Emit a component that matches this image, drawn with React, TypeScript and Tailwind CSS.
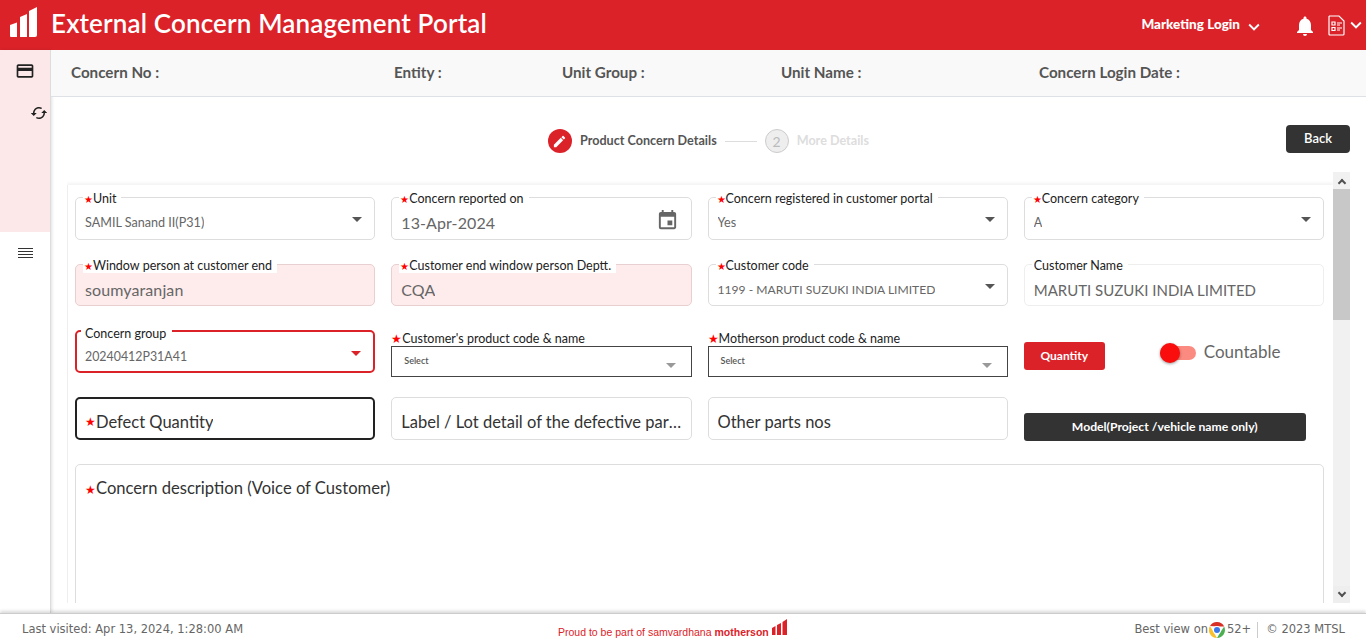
import React from 'react';
import { MdCreditCard, MdEdit, MdEvent, MdNotifications, MdSync, MdKeyboardArrowDown } from 'react-icons/md';

const Star = () => <span className="text-[10px] leading-none text-[#f00]">★</span>;
const BigStar = () => <span className="text-[12px] leading-none text-[#f00]">★</span>;

const Caret = ({ color = 'border-t-[#555]' }: { color?: string }) => (
  <span className={`absolute right-[12px] top-[19px] h-0 w-0 border-x-[5px] border-t-[5px] border-x-transparent ${color}`} />
);

const Field = ({
  label,
  value,
  required = true,
  select = false,
  small = false,
  upper = false,
  pink = false,
  faint = false,
  wide = false,
  children,
}: {
  label: string;
  value: string;
  required?: boolean;
  select?: boolean;
  small?: boolean;
  upper?: boolean;
  pink?: boolean;
  faint?: boolean;
  wide?: boolean;
  children?: React.ReactNode;
}) => (
  <div
    className={`relative h-full rounded-[5px] border ${
      pink ? 'border-[#e8cfd0] bg-[#feeced]' : faint ? 'border-[#eee] bg-white' : 'border-[#ddd] bg-white'
    }`}
  >
    <label
      className={`absolute -top-[6px] left-[7px] flex items-center bg-white pr-[5px] text-[12.5px] leading-[14px] text-[#222] ${
        required ? 'pl-[1px]' : 'pl-[2px]'
      }`}
    >
      {required && <Star />}
      {label}
    </label>
    <div
      className={`absolute left-[9px] truncate ${
        small
          ? `top-[17px] leading-[16px] text-[#666] ${upper ? 'text-[12.1px]' : 'text-[12.6px]'}`
          : wide
            ? 'top-[15px] text-[16px] leading-[20px] tracking-[0.1px] text-[#666]'
            : 'top-[15px] text-[15px] leading-[20px] text-[#666]'
      }`}
    >
      {value}
    </div>
    {select && <Caret />}
    {children}
  </div>
);

const BoxSelect = ({ label }: { label: string }) => (
  <div className="flex h-[47px] flex-col">
    <label className="flex h-[16px] items-center pt-[1px] text-[12.5px] leading-[16px] text-[#222]">
      <BigStar />
      {label}
    </label>
    <div className="relative h-[31px] border border-[#444] bg-white">
      <span className="absolute left-[12px] top-[8px] text-[9px] leading-[12px] font-semibold text-[#555]">Select</span>
      <span className="absolute right-[15px] top-[16px] h-0 w-0 border-x-[5px] border-t-[5px] border-x-transparent border-t-[#999]" />
    </div>
  </div>
);

const PlainInput = ({ text, required = false, dark = false }: { text: string; required?: boolean; dark?: boolean }) => (
  <div
    className={`flex h-full items-center rounded-[5px] bg-white pt-[6px] text-[16.5px] leading-[22px] text-[#333] ${
      dark ? 'border-2 border-[#222] px-[8px]' : 'border border-[#ddd] px-[9px]'
    }`}
  >
    {required && <BigStar />}
    <span className="truncate">{text}</span>
  </div>
);

const App: React.FC = () => {
  return (
    <div className="flex h-[643px] w-[1366px] flex-col overflow-hidden bg-white font-['Lato',sans-serif] text-[#333]">
      <header className="flex h-[50px] shrink-0 items-center bg-[#dc2229] text-white">
        <div className="flex h-full w-[51px] shrink-0 items-start pt-[7px] pl-[10px]">
          <svg width="27" height="30" viewBox="0 0 27 30" fill="white">
            <path d="M0 18 L7 15.5 V30 H1 Q0 30 0 29 Z" />
            <path d="M10 10 L17 7 V30 H10 Z" />
            <path d="M19 4 L27 0 V28 Q27 30 25 30 H19 Z" />
          </svg>
        </div>
        <h1 className="-mt-[4px] text-[26px] font-semibold tracking-[0.15px]">External Concern Management Portal</h1>
        <div className="ml-auto flex items-center">
          <span className="-mt-[1px] text-[13.5px] font-black">Marketing Login</span>
          <MdKeyboardArrowDown className="mt-[3px] ml-[3px] text-[22px]" />
          <MdNotifications className="mt-[2px] ml-[28px] text-[24px]" />
          <svg className="ml-[11px]" width="17" height="21" viewBox="0 0 17 21" fill="none" stroke="white" strokeWidth="1.2">
            <path d="M1.5 1 H11 L16 6 V19 Q16 20 15 20 H2 Q1 20 1 19 V1.5 Z" />
            <path d="M4 7 H7 V10 H4 Z M4 12.5 H7 V15.5 H4 Z M9 8 H14 M9 10 H12 M9 13 H14 M9 15 H12" />
          </svg>
          <MdKeyboardArrowDown className="-mr-[1px] text-[22px]" />
        </div>
      </header>

      <div className="flex min-h-0 flex-1">
        <aside className="flex w-[51px] shrink-0 flex-col border-r border-[#ddd] shadow-[1px_0_3px_rgba(0,0,0,0.12)]">
          <div className="relative h-[182px] bg-[#fce8e9]">
            <MdCreditCard className="absolute left-[15px] top-[11px] text-[20px] text-[#222]" />
            <MdSync className="absolute left-[30px] top-[54px] rotate-90 text-[18px] text-[#222]" />
          </div>
          <div className="mt-[16px] flex flex-col items-center gap-[2px]">
            <span className="h-px w-[15px] bg-[#333]" />
            <span className="h-px w-[15px] bg-[#333]" />
            <span className="h-px w-[15px] bg-[#333]" />
            <span className="h-px w-[15px] bg-[#333]" />
          </div>
        </aside>

        <main className="flex min-w-0 flex-1 flex-col">
          <div className="flex h-[47px] shrink-0 items-center border-b border-[#dee2e6] bg-[#f9f9f9] pb-[2px] text-[15.2px] font-bold text-[#555]">
            <span className="ml-[20px] w-[323px]">Concern No :</span>
            <span className="w-[168px]">Entity :</span>
            <span className="w-[219px]">Unit Group :</span>
            <span className="w-[258px]">Unit Name :</span>
            <span>Concern Login Date :</span>
          </div>

          <div className="relative flex h-[75px] shrink-0 items-start justify-center pt-[32px]">
            <div className="flex items-center">
              <span className="flex h-[24px] w-[24px] items-center justify-center rounded-full bg-[#dc2229] text-white">
                <MdEdit className="text-[15px]" />
              </span>
              <span className="ml-[8px] text-[12.6px] font-bold text-[#555]">Product Concern Details</span>
              <span className="mx-[8px] h-px w-[32px] bg-[#ddd]" />
              <span className="flex h-[24px] w-[24px] items-center justify-center rounded-full border border-[#ccc] bg-[#eee] text-[14px] text-[#bbb]">
                2
              </span>
              <span className="ml-[8px] text-[12.6px] font-bold text-[#ddd]">More Details</span>
            </div>
            <button className="absolute right-[16px] top-[28px] h-[28px] w-[64px] rounded-[4px] bg-[#333] text-[13px] font-semibold text-white">
              Back
            </button>
          </div>

          <div className="mr-[16px] ml-[16px] flex min-h-0 flex-1">
            <div className="min-w-0 flex-1 overflow-hidden pt-[13px]">
              <div className="h-full border-l border-[#eee] pt-[12px] pr-[9px] pl-[7px] shadow-[0_-2px_3px_rgba(0,0,0,0.05)]">
                <div className="grid grid-cols-4 grid-rows-[43px_42px_43px_43px] gap-x-[16px] gap-y-[24px]">
                  <Field label="Unit" value="SAMIL Sanand II(P31)" select small />
                  <Field label="Concern reported on" value="13-Apr-2024" wide>
                    <MdEvent className="absolute right-[12px] top-[11px] text-[23px] text-[#666]" />
                  </Field>
                  <Field label="Concern registered in customer portal" value="Yes" select small />
                  <Field label="Concern category" value="A" select small />

                  <Field label="Window person at customer end" value="soumyaranjan" pink wide />
                  <Field label="Customer end window person Deptt." value="CQA" pink wide />
                  <Field label="Customer code" value="1199 - MARUTI SUZUKI INDIA LIMITED" select small upper />
                  <Field label="Customer Name" value="MARUTI SUZUKI INDIA LIMITED" required={false} faint />

                  <div className="relative h-full rounded-[5px] border-2 border-[#dc2229] bg-white">
                    <label className="absolute -top-[5px] left-[4px] bg-white pr-[6px] pl-[4px] text-[12.5px] leading-[14px] text-[#222]">
                      Concern group
                    </label>
                    <div className="absolute left-[8px] top-[17px] text-[12.4px] leading-[16px] text-[#666]">20240412P31A41</div>
                    <Caret color="border-t-[#dc2229]" />
                  </div>
                  <BoxSelect label="Customer's product code & name" />
                  <BoxSelect label="Motherson product code & name" />
                  <div className="flex h-full items-center">
                    <button className="mt-[9px] h-[28px] w-[81px] rounded-[3px] bg-[#dc2229] text-[12px] font-bold text-white">
                      Quantity
                    </button>
                    <div className="relative mt-[2px] ml-[55px] h-[14px] w-[36px] rounded-full bg-[#fb8a80]">
                      <span className="absolute -top-[3px] left-0 h-[20px] w-[20px] rounded-full bg-[#f90d0d] shadow-[0_1px_3px_rgba(0,0,0,0.4)]" />
                    </div>
                    <span className="ml-[8px] text-[17px] text-[#666]">Countable</span>
                  </div>

                  <PlainInput text="Defect Quantity" required dark />
                  <PlainInput text="Label / Lot detail of the defective parts" />
                  <PlainInput text="Other parts nos" />
                  <div className="flex h-full items-end">
                    <button className="mb-[-1px] h-[28px] w-[282px] rounded-[3px] bg-[#333] text-[12.2px] font-bold text-white">
                      Model(Project /vehicle name only)
                    </button>
                  </div>
                </div>

                <div className="mt-[24px] h-[300px] rounded-[5px] border border-[#ddd] px-[9px] pt-[12px] text-[16.6px] leading-[22px] text-[#333]">
                  <BigStar />
                  Concern description (Voice of Customer)
                </div>
              </div>
            </div>

            <div className="flex w-[17px] shrink-0 flex-col bg-[#f1f1f1]">
              <div className="flex h-[17px] items-center justify-center">
                <span className="h-[6px] w-[6px] translate-y-[2px] rotate-45 border-t-2 border-l-2 border-[#505050]" />
              </div>
              <div className="h-[131px] bg-[#c8c8c8]" />
              <div className="mt-auto flex h-[17px] items-center justify-center bg-[#eee]">
                <span className="h-[6px] w-[6px] -translate-y-[2px] rotate-45 border-r-2 border-b-2 border-[#505050]" />
              </div>
            </div>
          </div>
          <div className="h-[10px] shrink-0" />
        </main>
      </div>

      <footer className="relative z-10 flex h-[30px] shrink-0 items-center border-t border-[#ccc] bg-white pt-[3px] font-['DejaVu_Sans',sans-serif] text-[11.5px] text-[#666] shadow-[0_-2px_3px_rgba(0,0,0,0.15)]">
        <span className="ml-[22px]">Last visited: Apr 13, 2024, 1:28:00 AM</span>
        <div className="absolute left-[558px] top-[5px] flex items-end font-['Liberation_Sans',sans-serif] text-[10.5px] leading-[12px] text-[#dc2229]">
          <span>Proud to be part of samvardhana</span>
          <span className="ml-[3px] font-bold">motherson</span>
          <svg className="mb-[3px] ml-[3px]" width="15" height="16" viewBox="0 0 15 16" fill="#dc2229">
            <path d="M0 9 L3.5 7 V16 H0 Z M5 6 L9 4 V16 H5 Z M10.5 3 L15 0 V16 H10.5 Z" />
          </svg>
        </div>
        <div className="ml-auto flex items-center">
          <span>Best view on</span>
          <svg width="16" height="16" viewBox="0 0 16 16" className="ml-px">
            <path d="M8 0 A8 8 0 0 1 15.2 4.6 H8 Z M1 4 A8 8 0 0 1 8 0 V4.6 Z" fill="#d93025" />
            <path d="M15.2 4.6 A8 8 0 0 1 8 16 L11.5 10 Z" fill="#4caf50" />
            <path d="M8 16 A8 8 0 0 1 1 4 L4.5 10 Z" fill="#fbc02d" />
            <circle cx="8" cy="8" r="4" fill="white" />
            <circle cx="8" cy="8" r="3" fill="#3b78e7" />
          </svg>
          <span className="ml-[2px]">52+</span>
          <span className="mr-[8px] ml-[6px] h-[16px] w-px bg-[#ccc]" />
          <span className="mr-[21px]">© 2023 MTSL</span>
        </div>
      </footer>
    </div>
  );
};

export default App;
